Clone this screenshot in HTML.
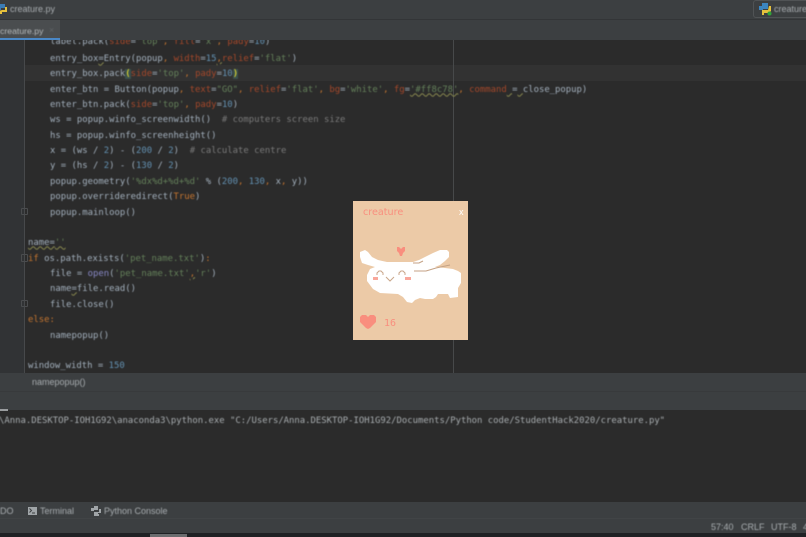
<!DOCTYPE html>
<html><head><meta charset="utf-8"><style>
html,body{margin:0;padding:0;background:#2b2b2b}
#r{position:relative;width:806px;height:537px;overflow:hidden;background:#2b2b2b;font-family:"Liberation Sans",sans-serif}
.a{position:absolute}
.l{position:absolute;left:28px;margin-top:1.5px;font:8.93px/15px "DejaVu Sans Mono","Liberation Mono",monospace;color:#a3b0bd;white-space:pre;filter:blur(.45px)}
.o{color:#c47530}.g{color:#64805a}.b{color:#6391b2}.k{color:#a5482a}.c{color:#7a7a7a}.p{color:#8888c6}
.t{position:absolute;font-size:9px;line-height:12px;color:#a8adb0;white-space:pre;filter:blur(.4px)}
.w{text-decoration:underline wavy #8a8a50 .6px;text-underline-offset:1px}
.f{position:absolute;left:21px;width:7px;border:1px solid #4a4c4e;box-sizing:border-box;border-radius:1px}
</style></head><body><div id="r">
<div class="a" style="left:0;top:0;width:806px;height:40px;background:#3c3f41"></div>
<div class="a" style="left:0;top:19px;width:806px;height:1px;background:#333537"></div>
<div class="a" style="left:0;top:20px;width:60px;height:18px;background:#4a4d4f"></div>
<div class="a" style="left:0;top:38px;width:60px;height:2px;background:#4a88c7"></div>
<svg class="a" style="left:0;top:3px" width="9" height="12" viewBox="0 0 9 12"><path d="M0 1h5v4H1v2H-2V3z" fill="#3b7cb5"/><path d="M7 4v5H2v2h-3V8l3-1h3V4z" fill="#e8c23c"/></svg>
<div class="t" style="left:10px;top:3px">creature.py</div>
<div class="t" style="left:0;top:25px;color:#b4b8ba;font-size:8.700px">creature.py</div>
<div class="t" style="left:49px;top:24px;color:#5f6365">×</div>
<div class="a" style="left:753px;top:0;width:60px;height:16px;border:1px solid #505355;border-radius:3px;background:#3c3f41"></div>
<svg class="a" style="left:759px;top:3px" width="13" height="13" viewBox="0 0 13 13"><path d="M3 0h6v6H4v1H0V3h3z" fill="#3b85c0"/><path d="M10 3h2v5l-2 2H5v2H3V7h6z" fill="#e6c13d"/><circle cx="10.500" cy="10.500" r="2" fill="#2fa33a"/></svg>
<div class="t" style="left:774px;top:3px">creature</div>

<div class="a" style="left:0;top:40px;width:24px;height:333px;background:#313335"></div>
<div class="a" style="left:24px;top:40px;width:1px;height:333px;background:#47494b"></div>
<div class="a" style="left:25px;top:65px;width:781px;height:16px;background:#323232"></div>
<div class="a" style="left:453px;top:40px;width:1px;height:333px;background:#47494a"></div>
<div class="f" style="top:208px;height:7px"></div>
<div class="f" style="top:254px;height:8px"></div>
<div class="f" style="top:300px;height:7px"></div>

<div class="a" style="left:25px;top:40px;width:781px;height:333px;overflow:hidden">
<div class="l" style="left:25px;top:-6.500px">label.pack(<span class="k">side</span>=<span class="g">'top'</span><span class="o">,</span> <span class="k">fill</span>=<span class="g">'x'</span><span class="o">,</span> <span class="k">pady</span>=<span class="b">10</span>)</div>
</div>
<div class="l" style="left:50px;top:50px">entry_box<span class="w">=</span>Entry(popup<span class="o">,</span> <span class="k">width</span>=<span class="b">15</span><span class="o w">,</span><span class="k">relief</span>=<span class="g">'flat'</span>)</div>
<div class="l" style="left:50px;top:65px">entry_box.pack<span style="background:#3b514d;color:#ffef28">(</span><span class="k">side</span>=<span class="g">'top'</span><span class="o">,</span> <span class="k">pady</span>=<span class="b">10</span><span style="background:#3b514d;color:#ffef28">)</span></div>
<div class="l" style="left:50px;top:81px">enter_btn = Button(popup<span class="o">,</span> <span class="k">text</span>=<span class="g">"GO"</span><span class="o">,</span> <span class="k">relief</span>=<span class="g">'flat'</span><span class="o">,</span> <span class="k">bg</span>=<span class="g">'white'</span><span class="o">,</span> <span class="k">fg</span>=<span class="g w">'#ff8c78'</span><span class="o">,</span> <span class="k">command</span><span class="w"> </span>=<span class="w"> </span>close_popup)</div>
<div class="l" style="left:50px;top:96px">enter_btn.pack(<span class="k">side</span>=<span class="g">'top'</span><span class="o">,</span> <span class="k">pady</span>=<span class="b">10</span>)</div>
<div class="l" style="left:50px;top:111px">ws = popup.winfo_screenwidth()  <span class="c"># computers screen size</span></div>
<div class="l" style="left:50px;top:127px">hs = popup.winfo_screenheight()</div>
<div class="l" style="left:50px;top:142px">x = (ws / <span class="b">2</span>) - (<span class="b">200</span> / <span class="b">2</span>)  <span class="c"># calculate centre</span></div>
<div class="l" style="left:50px;top:157px">y = (hs / <span class="b">2</span>) - (<span class="b">130</span> / <span class="b">2</span>)</div>
<div class="l" style="left:50px;top:173px">popup.geometry(<span class="g">'%dx%d+%d+%d'</span> % (<span class="b">200</span><span class="o">,</span> <span class="b">130</span><span class="o">,</span> x<span class="o">,</span> y))</div>
<div class="l" style="left:50px;top:188px">popup.overrideredirect(<span class="o">True</span>)</div>
<div class="l" style="left:50px;top:204px">popup.mainloop()</div>
<div class="l" style="top:234px"><span class="w">name=<span class="g">''</span></span></div>
<div class="l" style="top:250px"><span class="o">if</span> os.path.exists(<span class="g">'pet_name.txt'</span>)<span class="o">:</span></div>
<div class="l" style="left:50px;top:265px">file = <span class="p">open</span>(<span class="g">'pet_name.txt'</span><span class="o w">,</span><span class="g">'r'</span>)</div>
<div class="l" style="left:50px;top:280px">name<span class="w">=</span>file.read()</div>
<div class="l" style="left:50px;top:296px">file.close()</div>
<div class="l" style="top:311px"><span class="o">else:</span></div>
<div class="l" style="left:50px;top:327px">namepopup()</div>
<div class="l" style="top:357px">window_width = <span class="b">150</span></div>

<div class="a" style="left:0;top:373px;width:806px;height:37px;background:#3c3f41"></div>
<div class="t" style="left:32px;top:376px">namepopup()</div>
<div class="a" style="left:0;top:391px;width:806px;height:1px;background:#383a3c"></div>
<div class="a" style="left:0;top:409px;width:8px;height:2px;background:#9a9d9f"></div>
<div class="a" style="left:0;top:411px;width:806px;height:91px;background:#2b2b2b"></div>
<div class="l" style="left:-1px;top:412px;color:#a8adb0">\Anna.DESKTOP-IOH1G92\anaconda3\python.exe "C:/Users/Anna.DESKTOP-IOH1G92/Documents/Python code/StudentHack2020/creature.py"</div>

<div class="a" style="left:0;top:502px;width:806px;height:31px;background:#3c3f41"></div>
<div class="a" style="left:0;top:518px;width:806px;height:1px;background:#414446"></div>
<div class="a" style="left:0;top:533px;width:806px;height:4px;background:#1f2124"></div>
<div class="a" style="left:150px;top:534px;width:37px;height:3px;background:#6b6d6f"></div>
<div class="t" style="left:0;top:505px">DO</div>
<svg class="a" style="left:28px;top:507px;filter:blur(.3px)" width="9" height="8" viewBox="0 0 9 8"><rect width="9" height="8" fill="#a0a5a8"/><path d="M1.500 1.500L3.500 3.500L1.500 5.500M4 6h3" fill="none" stroke="#3c3f41" stroke-width="1"/></svg>
<div class="t" style="left:40px;top:505px">Terminal</div>
<svg class="a" style="left:91px;top:506px;filter:blur(.3px)" width="10" height="10" viewBox="0 0 10 10"><path d="M3 0h4v4H3v1H0V2h3zM8 3h2v4H7v1h1v2H3V6h5z" fill="#a0a5a8"/></svg>
<div class="t" style="left:104px;top:505px">Python Console</div>
<div class="t" style="left:711px;top:521px">57:40</div>
<div class="t" style="left:741px;top:521px">CRLF</div>
<div class="t" style="left:771px;top:521px">UTF-8</div>
<div class="t" style="left:803px;top:521px">4</div>

<div class="a" style="left:352.500px;top:201px;width:115.500px;height:139px;background:#eccaa7"></div>
<div class="a" style="left:363px;top:206px;font:9.600px/14px 'DejaVu Sans','Liberation Sans',sans-serif;color:#f98e7e;filter:blur(.35px)">creature</div>
<div class="a" style="left:459px;top:205px;font:9px/14px 'Liberation Sans',sans-serif;color:#fff;filter:blur(.2px)">x</div>
<svg class="a" style="left:352px;top:201px;filter:blur(.35px)" width="116" height="139" viewBox="352 201 116 139">
<polygon points="397,247 399,247 401,249 403,247 405,247 405,251 403,253 402,256 400,256 399,253 397,251" fill="#f98e7e"/>
<polygon points="360,252 365,250 368,252 372,257 378,260 387,262 413,262 419,260 425,257 433,253 440,250 447,250 449,252 449,257 445,261 440,265 435,267 445,268 453,269 458,271 461,273 461,283 458,288 458,297 450,298 448,294 438,294 436,297 433,299 425,299 420,298 415,300 412,303 407,302 403,297 398,294 380,293 373,289 370,285 367,281 367,275 370,269 375,267 368,265 362,263 360,257" fill="#fff"/>
<polyline points="413,263 419,263 423,261" fill="none" stroke="#c4a285" stroke-width="1"/>
<polyline points="414,271 426,271 436,268 450,265" fill="none" stroke="#c4a285" stroke-width="1"/>
<path d="M377 275v-2l2-2h2l2 2v2M399 275v-2l2-2h2l2 2v2" fill="none" stroke="#c9a68a" stroke-width="1"/>
<polyline points="386,277 390,281 394,277" fill="none" stroke="#c9a68a" stroke-width="1"/>
<rect x="373" y="277" width="5" height="3" fill="#f9a79b"/><rect x="405" y="277" width="6" height="3" fill="#f9a79b"/>
<polygon points="362,315 366,315 368,317 370,315 374,315 376,317 376,322 373,325 370,328 368,329 366,328 363,325 360,322 360,317" fill="#f98e7e"/>
</svg>
<div class="a" style="left:384px;top:317px;font:10px/14px 'DejaVu Sans Mono',monospace;color:#f98e7e;filter:blur(.35px)">16</div>
</div></body></html>
